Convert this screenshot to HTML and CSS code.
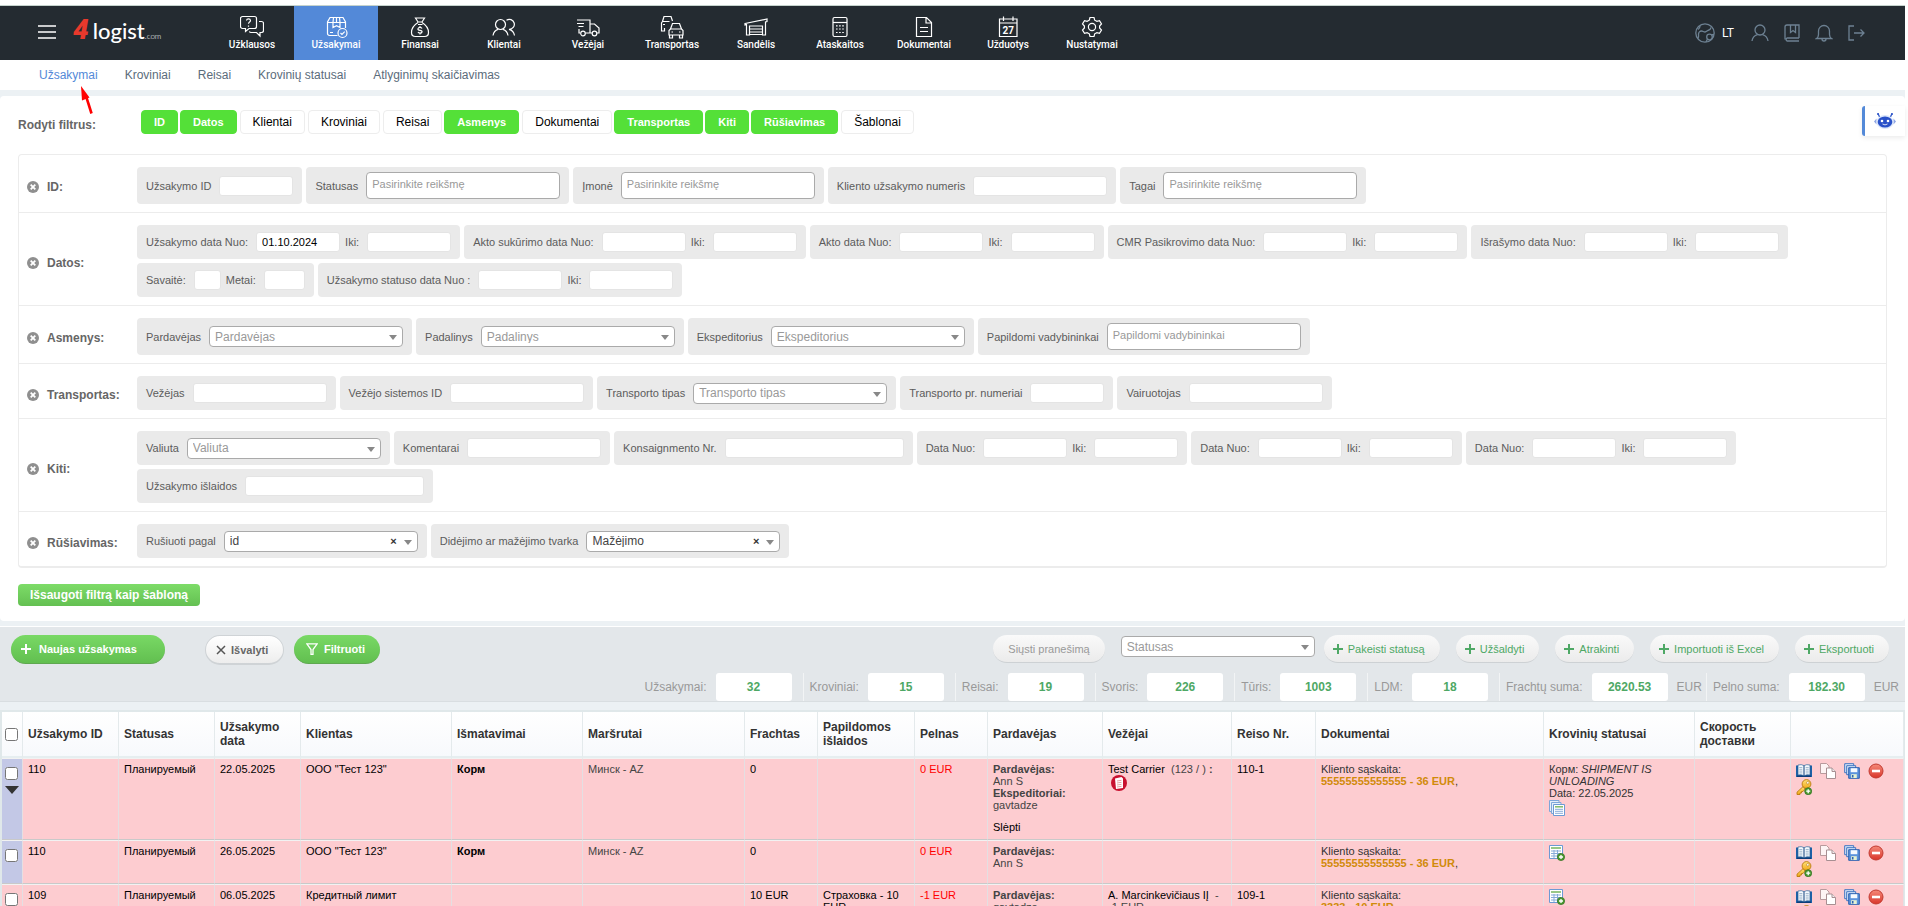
FILE: index.html
```
<!DOCTYPE html>
<html lang="lt">
<head>
<meta charset="utf-8">
<title>4logist – Užsakymai</title>
<link rel="stylesheet" href="styles.css">
</head>
<body>
<svg class="sprite" aria-hidden="true">
  <linearGradient id="gold" x1="0" y1="0" x2="0" y2="1"><stop offset="0" stop-color="#ffe27a"/><stop offset="1" stop-color="#f0a818"/></linearGradient>
  <linearGradient id="redball" x1="0" y1="0" x2="0" y2="1"><stop offset="0" stop-color="#f58a7a"/><stop offset="1" stop-color="#d9352a"/></linearGradient>
  <symbol id="i-x" viewBox="0 0 12 12"><circle cx="6" cy="6" r="6" fill="#8f8f8f"/><path d="M3.700 3.700l4.600 4.600M8.300 3.700L3.700 8.300" stroke="#fff" stroke-width="1.800"/></symbol>
  <symbol id="i-plus" viewBox="0 0 10 10"><path d="M5 0v10M0 5h10" stroke="currentColor" stroke-width="2"/></symbol>
  <symbol id="i-book" viewBox="0 0 16 16"><path d="M0 2.500h16v11.500H0z" fill="#1b62a8"/><path d="M1 12.500h14v1.500H1z" fill="#0d3d78"/><path d="M2 2q3.500-1 6 .6Q10.500 1 14 2v10q-3.500-.8-6 .8Q5.500 11.200 2 12z" fill="#f4f9fd" stroke="#2c5f94" stroke-width=".7"/><path d="M8 2.800v9.800" stroke="#0d3d78" stroke-width="1"/><path d="M3.300 4.500h3M3.300 6.300h3M3.300 8.100h3M3.300 9.900h3M9.700 4.500h3M9.700 6.300h3M9.700 8.100h3M9.700 9.900h3" stroke="#8fa9c4" stroke-width=".8"/></symbol>
  <symbol id="i-copy" viewBox="0 0 16 16"><path d="M.5.5h6l2.500 2.500v7.500H.5z" fill="#fdf4f4" stroke="#b89a9c"/><path d="M6.500 5h5.500l3.500 3.500v7h-9z" fill="#fff" stroke="#a88f92"/><path d="M12 5v3.500h3.500" fill="#eee" stroke="#a88f92"/></symbol>
  <symbol id="i-save" viewBox="0 0 16 16"><path d="M.7.7h9v9h-9z" fill="#dce9fa" stroke="#3f74c0"/><path d="M2.700 2.700h9v9h-9z" fill="#dce9fa" stroke="#3f74c0"/><path d="M4.700 4.700h10.600v10.600H4.700z" fill="#5b93dc" stroke="#2e62b0"/><path d="M6.700 5.200h6.600v4H6.700z" fill="#f6faff"/><path d="M7.200 11.200h5.600v3.800H7.200z" fill="#e4f2d2"/><path d="M8 12h1.500v2.500H8z" fill="#2e62b0"/></symbol>
  <symbol id="i-del" viewBox="0 0 16 16"><circle cx="8" cy="8" r="7" fill="url(#redball)" stroke="#c23a30"/><path d="M4 6.700h8v2.600H4z" fill="#fff"/></symbol>
  <symbol id="i-key" viewBox="0 0 16 16"><path d="M7.200 7.500L1 13.200V15.500h3v-1.500h1.500v-1.500H7l2.200-2.500z" fill="url(#gold)" stroke="#b97a0c" stroke-width=".9"/><circle cx="10.500" cy="5" r="4.400" fill="url(#gold)" stroke="#b97a0c" stroke-width=".9"/><circle cx="11.800" cy="3.800" r="1.300" fill="#fff" stroke="#b97a0c" stroke-width=".6"/><circle cx="12.200" cy="12.200" r="3.500" fill="#4c9a33" stroke="#2f6d1c" stroke-width=".7"/><path d="M12.200 10.200v4M10.200 12.200h4" stroke="#fff" stroke-width="1.300"/></symbol>
  <symbol id="i-tables" viewBox="0 0 16 16"><path d="M.5.5h9.500v11H.5z" fill="#e6effa" stroke="#7ea6d8"/><path d="M2.500 2.500h9.500v11H2.500z" fill="#e6effa" stroke="#7ea6d8"/><path d="M4.500 4.500h11v11h-11z" fill="#fff" stroke="#6c9ad4"/><path d="M6 6.800h8" stroke="#7fba6a" stroke-width="1.500"/><path d="M6 9.300h8M6 11.300h8M6 13.300h8" stroke="#86abd9"/></symbol>
  <symbol id="i-tableadd" viewBox="0 0 16 16"><path d="M.5.5h13v13H.5z" fill="#fff" stroke="#6c9ad4"/><path d="M2 3h10" stroke="#7fba6a" stroke-width="1.600"/><path d="M2 6h10M2 8.500h10M2 11h10M5 5v8M8.500 5v8" stroke="#86abd9"/><circle cx="12" cy="12" r="3.600" fill="#4c9a33" stroke="#2f6d1c" stroke-width=".7"/><path d="M12 10v4M10 12h4" stroke="#fff" stroke-width="1.300"/></symbol>
</svg>

<header class="topbar">
  <button class="menu-btn" aria-label="Meniu"><svg width="18" height="14" viewBox="0 0 18 14"><path d="M0 1h18M0 7h18M0 13h18" stroke="#fff" stroke-width="1.300"/></svg></button>
  <a class="logo" href="#"><span class="logo-4">4</span><span class="logo-name">logist</span><span class="logo-com">.com</span></a>
  <nav class="main-nav">
    <a href="#"><svg viewBox="0 0 24 24"><path d="M2.500 1.500h12a2 2 0 0 1 2 2v8a2 2 0 0 1-2 2H9l-3.500 3v-3h-3a2 2 0 0 1-2-2v-8a2 2 0 0 1 2-2zM19 6.500h2.500a2 2 0 0 1 2 2v7a2 2 0 0 1-2 2H20v3.500l-3.500-3.500H11a2 2 0 0 1-1.700-1"/><path d="M6.500 5.500q.2-1.700 2-1.700t2 1.700q0 1-1.200 1.700-.8.600-.8 1.600M8.500 10.500v1.200"/></svg>Užklausos</a>
    <a href="#" class="active"><svg viewBox="0 0 24 24"><path d="M13.500 20.500h-8a2 2 0 0 1-2-2V7L6 2.500h13L21.500 7v6M3.500 7.500h18M12.500 2.500v5M9.500 2.500l-.5 5v5l3.500-1.800 3.500 1.800v-5l-.5-5M6 17.500h3"/><circle cx="18.500" cy="18" r="4.500"/><path d="M16.500 18l1.500 1.500 2.700-2.800"/></svg>Užsakymai</a>
    <a href="#"><svg viewBox="0 0 24 24"><path d="M7.500 3h9l-2.500 4h-4zM10 9.500h4.500M10 7.500C6 10 3.500 14 3.500 17.500c0 2.700 1.500 4 4 4h9c2.500 0 4-1.300 4-4 0-3.500-2.500-7.500-6.500-10"/><path d="M14 13.500q-.5-1.200-2-1.200t-2 1.300 2 1.700 2 1.700-2 1.200-2-1.200M12 11v1.300M12 18.200v1.300"/></svg>Finansai</a>
    <a href="#"><svg viewBox="0 0 24 24"><circle cx="8.500" cy="9.500" r="5"/><path d="M1 20.500c.5-3 2.500-5.500 5-6.200M16 20.500c-.5-3-2.500-5.500-5-6.200M14.500 5.200A5 5 0 1 1 17 14.300c2.700.6 5 3 5.500 6.200"/></svg>Klientai</a>
    <a href="#"><svg viewBox="0 0 24 24"><path d="M1 5h13v13H9.500M4 18H3v-4M1 8.500h7M2.500 11.500h5M14 9h4.500l4.500 4v5h-2M14 18h2"/><circle cx="7" cy="18.500" r="2.300"/><circle cx="18.500" cy="18.500" r="2.300"/></svg>Vežėjai</a>
    <a href="#"><svg viewBox="0 0 24 24"><path d="M2.500 6.500L4 1.500h7l1.500 4.500M2.500 6.500h7M1.500 13V8l1-1.500M1.500 11v5h3v-3M3 9.500h2M12.500 8.500h7l2 5.500h-11zM10.500 14L9 15.500V20h14v-4.500L21.500 14M9.500 20v3h3v-3M19.500 20v3h3v-3M11.500 17h1.500M19 17h1.500"/></svg>Transportas</a>
    <a href="#"><svg viewBox="0 0 24 24"><path d="M1 8.500L23 4v2.500L21.500 7v13h-3v-9h-13v9h-3V9.500L1 10zM5.500 14h13M5.500 17h13M5.500 19.500h13"/></svg>Sandėlis</a>
    <a href="#"><svg viewBox="0 0 24 24"><rect x="5" y="2.500" width="14" height="19" rx="1.500"/><path d="M5 7.500h14"/><path d="M8 10.800h8M8 14h8M8 17.500h8" stroke-dasharray="1.600 1.500"/></svg>Ataskaitos</a>
    <a href="#"><svg viewBox="0 0 24 24"><path d="M4.500 2.500h10l5 5v14h-15zM14 2.500V8h5.500M8 12.500h8M8 16.500h8"/></svg>Dokumentai</a>
    <a href="#"><svg viewBox="0 0 24 24"><path d="M3.500 4h17.500v17.500H3.500zM3.500 8h17.500M7.500 1.500V6M17 1.500V6"/><text x="12.200" y="18.500">27</text></svg>Užduotys</a>
    <a href="#"><svg viewBox="0 0 24 24"><circle cx="12" cy="12" r="3.600"/><path d="M10 2.500h4l.7 2.700 2.200 1.200 2.600-.8 2 3.400-1.900 2v2l1.900 2-2 3.400-2.600-.8-2.200 1.200-.7 2.700h-4l-.7-2.700-2.200-1.200-2.600.8-2-3.400 1.900-2v-2l-1.900-2 2-3.400 2.600.8 2.200-1.200z"/></svg>Nustatymai</a>
  </nav>
  <div class="user-nav">
    <button class="lang"><svg width="20" height="20" viewBox="0 0 20 20"><circle cx="10" cy="10" r="9.200"/><path d="M3 15.500c1-1.500.5-3 .5-4.500S5 8 6.500 8s2 1 3.500 1 3-2 4-2 1.500-1 2-2.500M5 3q0 2.500-2 3.500"/><circle cx="14.500" cy="14" r="2.800"/><path d="M12.500 16l-1.500 3M16.500 12l2.500-.5"/></svg>LT</button>
    <a href="#" aria-label="Profilis"><svg width="18" height="18" viewBox="0 0 18 18"><circle cx="9" cy="6" r="5"/><path d="M1 17c.5-3.500 2.800-5.500 5.500-6.300M17 17c-.5-3.500-2.800-5.500-5.500-6.300"/></svg></a>
    <a href="#" aria-label="Žinynas"><svg width="18" height="18" viewBox="0 0 18 18"><path d="M16 14H4a1.700 1.700 0 0 0 0 3h12M2 15.500V3a2 2 0 0 1 2-2h12v13M7.500 1v7.500l2.500-2 2.500 2V1"/></svg></a>
    <a href="#" aria-label="Pranešimai"><svg width="18" height="18" viewBox="0 0 18 18"><path d="M1.500 14.500h15c-1.500-1-2-2-2-4V7a5.500 5.500 0 0 0-11 0v3.500c0 2-.5 3-2 4zM7 15a2 2 0 0 0 4 0"/></svg></a>
    <a href="#" aria-label="Atsijungti"><svg width="18" height="18" viewBox="0 0 18 18"><path d="M7 2H2v14h5M7 9h9.500M13.500 5.500L17 9l-3.500 3.500"/></svg></a>
  </div>
</header>

<nav class="sub-nav">
  <a href="#" class="active">Užsakymai</a><a href="#">Kroviniai</a><a href="#">Reisai</a><a href="#">Krovinių statusai</a><a href="#">Atlyginimų skaičiavimas</a>
</nav>
<svg class="pointer" width="18" height="30" viewBox="0 0 18 30" aria-hidden="true"><path d="M12.500 27.500L7 10" stroke="#f00" stroke-width="2.600"/><path d="M2 0l8.500 11.500-7.500 3z" fill="#f00"/></svg>

<main>
<section class="filters">
  <div class="toggle-row">
    <span class="toggle-title">Rodyti filtrus:</span>
    <button class="toggle on">ID</button><button class="toggle on">Datos</button><button class="toggle">Klientai</button><button class="toggle">Kroviniai</button><button class="toggle">Reisai</button><button class="toggle on">Asmenys</button><button class="toggle">Dokumentai</button><button class="toggle on">Transportas</button><button class="toggle on">Kiti</button><button class="toggle on">Rūšiavimas</button><button class="toggle">Šablonai</button>
  </div>
  <button class="bot" aria-label="Asistentas"><svg width="24" height="18" viewBox="0 0 24 18"><path d="M5 1.500l1.800 4M19 1.500l-1.800 4" stroke="#2d55c9" stroke-width="1.300"/><circle cx="5" cy="2" r="1" fill="#2d55c9"/><circle cx="19" cy="2" r="1" fill="#2d55c9"/><path d="M3.500 6.500L1 9.500l2.500 3zM20.500 6.500L23 9.500l-2.500 3z" fill="#8fa6e4"/><ellipse cx="12" cy="10" rx="8.500" ry="7" fill="#dbe6fa"/><ellipse cx="12" cy="10" rx="7.300" ry="5.600" fill="#2850c8"/><circle cx="9" cy="9" r="1.300" fill="#fff"/><circle cx="15" cy="9" r="1.300" fill="#fff"/><path d="M9.500 12q2.500 1.800 5 0" fill="none" stroke="#fff" stroke-width=".8"/></svg></button>

  <div class="filter-box">
    <div class="filter-line">
      <div class="line-title"><button class="close" aria-label="Slėpti ID"><svg><use href="#i-x"/></svg></button>ID:</div>
      <div class="groups">
        <div class="group tall"><label for="oid">Užsakymo ID</label><input class="w-s" id="oid"></div>
        <div class="group tall"><label for="st">Statusas</label><input class="multi" id="st" placeholder="Pasirinkite reikšmę"></div>
        <div class="group tall"><label for="im">Įmonė</label><input class="multi" id="im" placeholder="Pasirinkite reikšmę"></div>
        <div class="group tall"><label for="kn">Kliento užsakymo numeris</label><input class="w-l" id="kn"></div>
        <div class="group tall"><label for="tg">Tagai</label><input class="multi" id="tg" placeholder="Pasirinkite reikšmę"></div>
      </div>
    </div>
    <div class="filter-line">
      <div class="line-title"><button class="close" aria-label="Slėpti datas"><svg><use href="#i-x"/></svg></button>Datos:</div>
      <div class="groups">
        <div class="group"><label for="d1">Užsakymo data Nuo:</label><input class="w-d" id="d1" value="01.10.2024"><label for="d2">Iki:</label><input class="w-d" id="d2"></div>
        <div class="group"><label for="d3">Akto sukūrimo data Nuo:</label><input class="w-d" id="d3"><label for="d4">Iki:</label><input class="w-d" id="d4"></div>
        <div class="group"><label for="d5">Akto data Nuo:</label><input class="w-d" id="d5"><label for="d6">Iki:</label><input class="w-d" id="d6"></div>
        <div class="group"><label for="d7">CMR Pasikrovimo data Nuo:</label><input class="w-d" id="d7"><label for="d8">Iki:</label><input class="w-d" id="d8"></div>
        <div class="group"><label for="d9">Išrašymo data Nuo:</label><input class="w-d" id="d9"><label for="d10">Iki:</label><input class="w-d" id="d10"></div>
        <div class="group"><label for="sv">Savaitė:</label><input class="w-2" id="sv"><label for="mt">Metai:</label><input class="w-4" id="mt"></div>
        <div class="group"><label for="d11">Užsakymo statuso data Nuo :</label><input class="w-d" id="d11"><label for="d12">Iki:</label><input class="w-d" id="d12"></div>
      </div>
    </div>
    <div class="filter-line">
      <div class="line-title"><button class="close" aria-label="Slėpti asmenis"><svg><use href="#i-x"/></svg></button>Asmenys:</div>
      <div class="groups">
        <div class="group tall"><label for="pd">Pardavėjas</label><span class="pick"><select id="pd"><option>Pardavėjas</option></select></span></div>
        <div class="group tall"><label for="pl">Padalinys</label><span class="pick"><select id="pl"><option>Padalinys</option></select></span></div>
        <div class="group tall"><label for="ek">Ekspeditorius</label><span class="pick"><select id="ek"><option>Ekspeditorius</option></select></span></div>
        <div class="group tall"><label for="pv">Papildomi vadybininkai</label><input class="multi" id="pv" placeholder="Papildomi vadybininkai"></div>
      </div>
    </div>
    <div class="filter-line">
      <div class="line-title"><button class="close" aria-label="Slėpti transportą"><svg><use href="#i-x"/></svg></button>Transportas:</div>
      <div class="groups">
        <div class="group"><label for="vz">Vežėjas</label><input class="w-l" id="vz"></div>
        <div class="group"><label for="vs">Vežėjo sistemos ID</label><input class="w-l" id="vs"></div>
        <div class="group"><label for="tt">Transporto tipas</label><span class="pick"><select id="tt"><option>Transporto tipas</option></select></span></div>
        <div class="group"><label for="tn">Transporto pr. numeriai</label><input class="w-s" id="tn"></div>
        <div class="group"><label for="vr">Vairuotojas</label><input class="w-l" id="vr"></div>
      </div>
    </div>
    <div class="filter-line">
      <div class="line-title"><button class="close" aria-label="Slėpti kitus"><svg><use href="#i-x"/></svg></button>Kiti:</div>
      <div class="groups">
        <div class="group"><label for="vl">Valiuta</label><span class="pick"><select id="vl"><option>Valiuta</option></select></span></div>
        <div class="group"><label for="km">Komentarai</label><input class="w-l" id="km"></div>
        <div class="group"><label for="ks">Konsaignmento Nr.</label><input class="w-xl" id="ks"></div>
        <div class="group"><label for="e1">Data Nuo:</label><input class="w-d" id="e1"><label for="e2">Iki:</label><input class="w-d" id="e2"></div>
        <div class="group"><label for="e3">Data Nuo:</label><input class="w-d" id="e3"><label for="e4">Iki:</label><input class="w-d" id="e4"></div>
        <div class="group"><label for="e5">Data Nuo:</label><input class="w-d" id="e5"><label for="e6">Iki:</label><input class="w-d" id="e6"></div>
        <div class="group"><label for="ui">Užsakymo išlaidos</label><input class="w-xl" id="ui"></div>
      </div>
    </div>
    <div class="filter-line">
      <div class="line-title"><button class="close" aria-label="Slėpti rūšiavimą"><svg><use href="#i-x"/></svg></button>Rūšiavimas:</div>
      <div class="groups">
        <div class="group"><label for="rp">Rušiuoti pagal</label><span class="pick chosen"><select id="rp"><option>id</option></select><button class="clear" aria-label="Išvalyti">×</button></span></div>
        <div class="group"><label for="rt">Didėjimo ar mažėjimo tvarka</label><span class="pick chosen"><select id="rt"><option>Mažėjimo</option></select><button class="clear" aria-label="Išvalyti">×</button></span></div>
      </div>
    </div>
  </div>
  <button class="save-filter">Išsaugoti filtrą kaip šabloną</button>
</section>

<section class="toolbar">
  <div class="tool-row">
    <button class="pill green new"><svg width="10" height="10"><use href="#i-plus"/></svg>Naujas užsakymas</button>
    <button class="pill plain"><svg width="10" height="10" viewBox="0 0 10 10"><path d="M1 1l8 8M9 1L1 9" stroke="#555" stroke-width="1.500"/></svg>Išvalyti</button>
    <button class="pill green filter"><svg width="12" height="12" viewBox="0 0 12 12"><path d="M.8.8h10.400L7 6.500v5H5v-5z" fill="none" stroke="#fff" stroke-width="1.300"/></svg>Filtruoti</button>
    <div class="actions">
      <button class="pill soft" disabled>Siųsti pranešimą</button>
      <span class="pick"><select aria-label="Statusas"><option>Statusas</option></select></span>
      <button class="pill soft add"><svg width="10" height="10"><use href="#i-plus"/></svg>Pakeisti statusą</button>
      <button class="pill soft add"><svg width="10" height="10"><use href="#i-plus"/></svg>Užšaldyti</button>
      <button class="pill soft add"><svg width="10" height="10"><use href="#i-plus"/></svg>Atrakinti</button>
      <button class="pill soft add"><svg width="10" height="10"><use href="#i-plus"/></svg>Importuoti iš Excel</button>
      <button class="pill soft add"><svg width="10" height="10"><use href="#i-plus"/></svg>Eksportuoti</button>
    </div>
  </div>
  <div class="totals">
    <div class="total">Užsakymai:<output>32</output></div>
    <div class="total">Kroviniai:<output>15</output></div>
    <div class="total">Reisai:<output>19</output></div>
    <div class="total">Svoris:<output>226</output></div>
    <div class="total">Tūris:<output>1003</output></div>
    <div class="total">LDM:<output>18</output></div>
    <div class="total money">Frachtų suma:<output>2620.53</output>EUR</div>
    <div class="total money">Pelno suma:<output>182.30</output>EUR</div>
  </div>
</section>

<table class="orders">
  <colgroup><col class="c-chk"><col class="c-id"><col class="c-id"><col class="c-date"><col class="c-client"><col class="c-dim"><col class="c-route"><col class="c-sum"><col class="c-extra"><col class="c-sum"><col class="c-seller"><col class="c-carrier"><col class="c-trip"><col class="c-doc"><col class="c-state"><col class="c-id"><col class="c-act"></colgroup>
  <thead>
    <tr><th class="chk"><input type="checkbox" aria-label="Žymėti visus"></th><th>Užsakymo ID</th><th>Statusas</th><th>Užsakymo data</th><th>Klientas</th><th>Išmatavimai</th><th>Maršrutai</th><th>Frachtas</th><th>Papildomos išlaidos</th><th>Pelnas</th><th>Pardavėjas</th><th>Vežėjai</th><th>Reiso Nr.</th><th>Dokumentai</th><th>Krovinių statusai</th><th>Скорость доставки</th><th></th></tr>
  </thead>
  <tbody>
    <tr class="first">
      <td class="chk marked"><input type="checkbox" aria-label="110"><button class="expand" aria-label="Išskleisti"></button></td>
      <td>110</td><td>Планируемый</td><td>22.05.2025</td><td>ООО "Тест 123"</td><td><b>Корм</b></td><td class="dim">Минск - AZ</td><td>0</td><td></td><td class="red">0 EUR</td>
      <td class="dim"><b>Pardavėjas:</b><br>Ann S<br><b>Ekspeditoriai:</b><br>gavtadze<a class="hide" href="#">Slėpti</a></td>
      <td>Test Carrier <span class="dim">&nbsp;(123 / ) <b>:</b></span><svg class="seal" viewBox="0 0 16 16"><circle cx="8" cy="8" r="8" fill="#c8102e"/><path d="M4 3.500l6.500-1.500L12 3.500V13l-7 1z" fill="#fff"/><path d="M6 6l4.500-.7M6 8l4.500-.7M6 10l4.500-.7M6 12l4.500-.7" stroke="#d88" stroke-width=".8"/></svg></td>
      <td>110-1</td><td class="doc">Kliento sąskaita:<br><a href="#">55555555555555 - 36 EUR</a>,</td>
      <td class="doc">Корм: <i>SHIPMENT IS UNLOADING</i><br>Data: 22.05.2025<svg class="ico block"><use href="#i-tables"/></svg></td><td></td>
      <td><div class="icons"><a href="#" aria-label="Atidaryti"><svg class="ico"><use href="#i-book"/></svg></a><a href="#" aria-label="Kopijuoti"><svg class="ico"><use href="#i-copy"/></svg></a><a href="#" aria-label="Išsaugoti"><svg class="ico"><use href="#i-save"/></svg></a><a href="#" aria-label="Trinti"><svg class="ico"><use href="#i-del"/></svg></a><a href="#" aria-label="Prieiga"><svg class="ico"><use href="#i-key"/></svg></a></div></td>
    </tr>
    <tr>
      <td class="chk marked"><input type="checkbox" aria-label="110"></td>
      <td>110</td><td>Планируемый</td><td>26.05.2025</td><td>ООО "Тест 123"</td><td><b>Корм</b></td><td class="dim">Минск - AZ</td><td>0</td><td></td><td class="red">0 EUR</td>
      <td class="dim"><b>Pardavėjas:</b><br>Ann S</td><td></td><td></td><td class="doc">Kliento sąskaita:<br><a href="#">55555555555555 - 36 EUR</a>,</td>
      <td><a href="#" aria-label="Pridėti"><svg class="ico"><use href="#i-tableadd"/></svg></a></td><td></td>
      <td><div class="icons"><a href="#" aria-label="Atidaryti"><svg class="ico"><use href="#i-book"/></svg></a><a href="#" aria-label="Kopijuoti"><svg class="ico"><use href="#i-copy"/></svg></a><a href="#" aria-label="Išsaugoti"><svg class="ico"><use href="#i-save"/></svg></a><a href="#" aria-label="Trinti"><svg class="ico"><use href="#i-del"/></svg></a><a href="#" aria-label="Prieiga"><svg class="ico"><use href="#i-key"/></svg></a></div></td>
    </tr>
    <tr>
      <td class="chk"><input type="checkbox" aria-label="109"></td>
      <td>109</td><td>Планируемый</td><td>06.05.2025</td><td>Кредитный лимит</td><td></td><td></td><td>10 EUR</td><td>Страховка - 10 EUR</td><td class="red">-1 EUR</td>
      <td class="dim"><b>Pardavėjas:</b><br>gavtadze</td><td>A. Marcinkevičiaus IĮ <span class="dim">&nbsp;- -1 EUR</span></td><td>109-1</td><td class="doc">Kliento sąskaita:<br><a href="#">3333 - 10 EUR</a>,</td>
      <td><a href="#" aria-label="Pridėti"><svg class="ico"><use href="#i-tableadd"/></svg></a></td><td></td>
      <td><div class="icons"><a href="#" aria-label="Atidaryti"><svg class="ico"><use href="#i-book"/></svg></a><a href="#" aria-label="Kopijuoti"><svg class="ico"><use href="#i-copy"/></svg></a><a href="#" aria-label="Išsaugoti"><svg class="ico"><use href="#i-save"/></svg></a><a href="#" aria-label="Trinti"><svg class="ico"><use href="#i-del"/></svg></a><a href="#" aria-label="Prieiga"><svg class="ico"><use href="#i-key"/></svg></a></div></td>
    </tr>
  </tbody>
</table>
</main>
</body>
</html>
```

FILE: styles.css
```
* { box-sizing: border-box; }
html { background: #fff; }
body {
  margin: 0;
  padding: 5px 3px 0 0;
  height: 100vh;
  overflow: hidden;
  font: 11px/12px "Liberation Sans", Arial, sans-serif;
  color: #000;
}
a { color: inherit; text-decoration: none; }
button, input, select { font: inherit; color: inherit; margin: 0; }
button { border: 0; padding: 0; background: none; cursor: pointer; }
.sprite { position: absolute; width: 0; height: 0; }

/* Header */
.topbar {
  display: flex;
  align-items: stretch;
  height: 55px;
  border-top: 1px solid #c5d3cd;
  background: #242b31;
  color: #fff;
}
.menu-btn { width: 18px; margin-left: 38px; padding-bottom: 2px; }
.menu-btn svg { display: block; }
.logo { display: flex; align-items: baseline; width: 137px; margin-left: 17px; padding-top: 9px; }
.logo-4 {
  font: italic 900 28px/30px Roboto, sans-serif;
  color: #e8392c;
}
.logo-name { margin-left: 4px; font: 500 22px/30px Lato, sans-serif; }
.logo-com { font: 300 8px/30px Lato, sans-serif; }
.main-nav { display: flex; }
.main-nav a {
  display: flex;
  flex-direction: column;
  align-items: center;
  width: 84px;
  padding-top: 9px;
  font: 500 10px/12px Roboto, sans-serif;
}
.main-nav .active { background: #5389d8; }
.main-nav svg { width: 24px; height: 24px; fill: none; stroke: #fff; stroke-width: 1.2; }
.main-nav text { font: 700 10px Roboto, sans-serif; fill: #fff; stroke: none; text-anchor: middle; }
.user-nav { display: flex; align-items: center; gap: 14px; margin-left: auto; margin-right: 40px; }
.user-nav svg { display: block; fill: none; stroke: #6d8192; stroke-width: 1.3; }
.lang { display: flex; align-items: center; gap: 7px; margin-right: 3px; font: 12px Roboto, sans-serif; color: #fff; }

.sub-nav {
  display: flex;
  gap: 27px;
  padding: 0 39px;
  font-size: 12px;
  line-height: 30px;
  color: #5b6c7b;
}
.sub-nav .active { color: #5389d8; }
.pointer { position: absolute; z-index: 5; left: 79px; top: 86px; }

main { background: #ecf1f4; padding-top: 6px; }

/* Filters */
.filters {
  position: relative;
  padding: 14px 18px 15px;
  border-radius: 4px;
  background: #fff;
}
.toggle-row { display: flex; gap: 2px; height: 24px; margin-bottom: 20px; }
.toggle-title { width: 121px; padding-top: 3px; font-size: 12px; line-height: 24px; font-weight: 700; color: #666; }
.toggle { padding: 0 12px; border: 1px solid #ededed; border-radius: 4px; background: #fff; font-size: 12px; }
.toggle.on { border-color: #54e038; background: #54e038; color: #fff; font-size: 11px; font-weight: 700; }
.toggle:not(.on) { margin-left: 1px; }
.bot {
  position: absolute;
  right: 0;
  top: 10px;
  width: 43px;
  height: 30px;
  border-left: 3px solid #5389d8;
  border-radius: 3px 0 0 3px;
  background: #fff;
  box-shadow: 0 2px 5px rgba(0, 0, 0, .08);
}
.bot svg { display: block; margin: 0 auto; }

.filter-box { border: 1px solid #ececec; border-bottom-width: 2px; border-radius: 4px; }
.filter-line { display: flex; padding: 12px 0 8px 8px; }
.filter-line + .filter-line { border-top: 1px solid #ececec; }
.line-title {
  display: flex;
  align-items: center;
  gap: 8px;
  flex: none;
  width: 110px;
  padding-top: 3px;
  font-size: 12px;
  line-height: 14px;
  font-weight: 700;
  color: #666;
}
.close, .close svg { display: block; width: 12px; height: 12px; }
.groups { display: flex; flex-wrap: wrap; gap: 4px; }
.group {
  display: flex;
  align-items: center;
  height: 34px;
  padding: 0 9px;
  border-radius: 4px;
  background: #eaeaea;
  color: #5c5c5c;
}
.group.tall { height: 37px; }
.group input, .group .pick { margin-left: 8px; }
.group input + label { margin-left: 5px; }
.group input { height: 20px; padding: 0 5px; border: 1px solid #e4e4e4; border-radius: 3px; background: #fff; color: #000; }
.group input.w-2 { width: 27px; }
.group input.w-4 { width: 41px; }
.group input.w-s { width: 74px; }
.group input.w-d { width: 84px; }
.group input.w-l { width: 134px; }
.group input.w-xl { width: 179px; }
.group input.multi { width: 194px; height: 27px; padding-bottom: 3px; border-color: #aaa; border-radius: 4px; }
::placeholder { color: #999; opacity: 1; }

.pick { position: relative; display: block; }
.pick select {
  display: block;
  appearance: none;
  width: 194px;
  height: 21px;
  padding: 0 24px 0 5px;
  border: 1px solid #aaa;
  border-radius: 4px;
  background: #fff;
  font-size: 12px;
  color: #999;
}
.pick::after {
  content: "";
  position: absolute;
  right: 6px;
  top: 9px;
  border: 4px solid transparent;
  border-top: 5px solid #888;
  border-bottom: 0;
  pointer-events: none;
}
.pick.chosen select { color: #444; }
.clear { position: absolute; right: 21px; top: 4px; font-size: 11px; line-height: 12px; font-weight: 700; color: #333; }

.save-filter {
  display: block;
  height: 22px;
  margin-top: 16px;
  padding: 0 12px;
  border-radius: 4px;
  background: linear-gradient(#7ddc68, #64c052);
  color: #fff;
  font-size: 12px;
  font-weight: 700;
}

/* Toolbar */
.toolbar {
  margin-top: 5px;
  padding: 8px 0 0 11px;
  border-top: 1px solid #fff;
  border-bottom: 1px solid #d9dee1;
  background: #e3e7ea;
}
.tool-row { display: flex; align-items: flex-start; height: 38px; padding-right: 16px; }
.pill { display: flex; align-items: center; height: 29px; border-radius: 15px; font-size: 11px; font-weight: 700; white-space: nowrap; }
.pill.green { background: linear-gradient(#79d965, #62bf50); color: #fff; border-bottom: 1px solid #5fa850; }
.pill.new { width: 154px; padding-left: 10px; gap: 8px; }
.pill.plain { width: 79px; height: 30px; margin: 0 10px 0 40px; padding-left: 10px; gap: 5px; border: 1px solid #cfd3d6; border-bottom-width: 2px; background: linear-gradient(#fff, #ededed); color: #666; }
.pill.filter { width: 86px; padding-left: 12px; gap: 6px; }
.actions { display: flex; align-items: flex-start; gap: 16px; margin-left: auto; }
.actions .pick { margin-top: 1px; margin-right: -7px; }
.pill.soft { height: 28px; padding: 0 15px; background: linear-gradient(#fafafa, #ebebeb); border-bottom: 1px solid #cdd1d4; color: #999; font-weight: 400; }
.pill.add { padding-left: 9px; gap: 5px; color: #4ea865; }

.totals { display: flex; justify-content: flex-end; padding-right: 6px; font-size: 12px; line-height: 28px; color: #999; }
.total { display: flex; margin-left: 6px; padding-right: 11px; border-right: 1px solid #f2f4f5; }
.total output { width: 76px; margin-left: 9px; border-radius: 3px; background: #fff; color: #4ea865; font-weight: 700; text-align: center; }
.total.money { padding-right: 4px; }
.total.money output { margin-right: 9px; }
.total:last-child { padding-right: 0; border-right: 0; }

/* Orders table */
.orders { width: 100%; margin-top: 8px; table-layout: fixed; border-spacing: 0; border: 2px solid #e0e8ea; border-bottom: 0; border-right-width: 1px; }
.c-chk { width: 21px; }
.c-id { width: 96px; }
.c-extra { width: 97px; }
.c-date { width: 86px; }
.c-client { width: 151px; }
.c-dim { width: 131px; }
.c-route { width: 162px; }
.c-sum { width: 73px; }
.c-seller { width: 115px; }
.c-carrier { width: 129px; }
.c-trip { width: 84px; }
.c-doc { width: 228px; }
.c-state { width: 151px; }
.c-act { width: 113px; }
.orders th {
  height: 46px;
  padding: 0 4px 0 5px;
  border-right: 1px solid #e4eaec;
  border-bottom: 2px solid #e6eef0;
  background: linear-gradient(#fff, #f7f9fc);
  color: #333;
  font-size: 12px;
  line-height: 14px;
  text-align: left;
}
.orders td {
  height: 44px;
  padding: 4px 4px 0 5px;
  border-top: 1px solid #f2f2f2;
  border-right: 1px solid #e4dfe2;
  border-bottom: 1px solid #c9c9c9;
  background: #fdccd0;
  vertical-align: top;
}
.orders .first td { height: 82px; }
.orders .chk { padding-left: 3px; padding-right: 0; }
.orders td.chk { padding-top: 8px; }
.orders .marked { background: #c3c8e6; }
.orders input { display: block; width: 13px; height: 13px; }
.expand { display: block; margin-top: 6px; border: 7px solid transparent; border-top: 8px solid #333; border-bottom: 0; }
.orders .dim { color: #444; }
.orders .red { color: #f00; }
.orders .doc { color: #333; }
.orders .doc a { color: #d18a0a; font-weight: 700; }
.hide { display: block; margin-top: 10px; color: #000; }
.seal { display: block; width: 16px; height: 16px; margin-left: 3px; }
.ico { display: block; width: 16px; height: 16px; }
.ico.block { margin-top: 1px; }
.icons { display: flex; flex-wrap: wrap; column-gap: 8px; }
```
